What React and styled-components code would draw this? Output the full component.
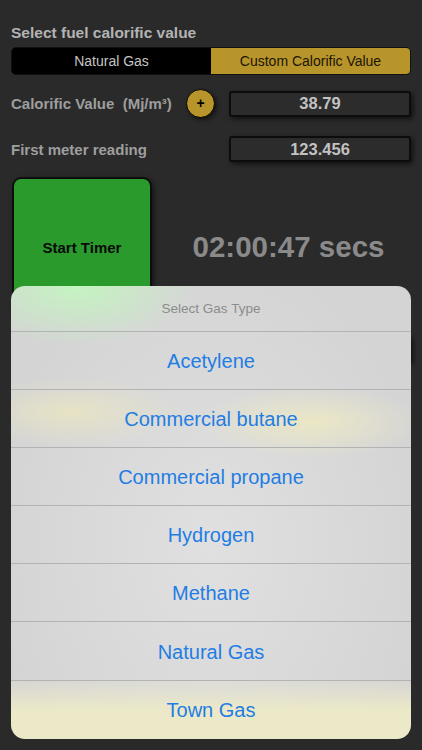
import React, { useState } from 'react'
import styled, { createGlobalStyle } from 'styled-components'

const GlobalStyle = createGlobalStyle`
  html, body {
    margin: 0;
    padding: 0;
    background: #2a2a2a;
  }
  body {
    font-family: "Liberation Sans", Arial, sans-serif;
    overflow: hidden;
  }
`;

const gasTypes = [
  'Acetylene',
  'Commercial butane',
  'Commercial propane',
  'Hydrogen',
  'Methane',
  'Natural Gas',
  'Town Gas',
];

const App = () => {
  const [mode, setMode] = useState('custom');
  const [gas, setGas] = useState('Natural Gas');

  return (
    <Page>
      <GlobalStyle />
      <SectionTitle>Select fuel calorific value</SectionTitle>
      <Segmented>
        <Segment $active={mode === 'natural'} onClick={() => setMode('natural')}>
          Natural Gas
        </Segment>
        <Segment $active={mode === 'custom'} onClick={() => setMode('custom')}>
          Custom Calorific Value
        </Segment>
      </Segmented>

      <FieldRow $top={14}>
        <FieldLabel $width={175}>Calorific Value&nbsp; (Mj/m³)</FieldLabel>
        <PlusButton>+</PlusButton>
        <ValueBox>38.79</ValueBox>
      </FieldRow>

      <FieldRow $top={18}>
        <FieldLabel>First meter reading</FieldLabel>
        <ValueBox>123.456</ValueBox>
      </FieldRow>

      <TimerRow>
        <StartButton>Start Timer</StartButton>
        <TimerText>02:00:47 secs</TimerText>
      </TimerRow>

      <FieldRow $top={19}>
        <FieldLabel>Second meter reading</FieldLabel>
        <ValueBox />
      </FieldRow>

      <Sheet>
        <SheetHeader>Select Gas Type</SheetHeader>
        {gasTypes.map((name) => (
          <SheetOption key={name} onClick={() => setGas(name)}>
            {name}
          </SheetOption>
        ))}
      </Sheet>
    </Page>
  )
}

export default App

const Page = styled.div`
  position: relative;
  height: 750px;
  box-sizing: border-box;
  padding: 24px 11px 0;
`;

const SectionTitle = styled.div`
  font-size: 15.5px;
  font-weight: 700;
  line-height: 18px;
  color: #b3b3b3;
  margin-bottom: 5px;
`;

const Segmented = styled.div`
  display: flex;
  height: 28px;
  border-radius: 5px;
  border: 1px solid #111;
  background: #000;
  overflow: hidden;
  box-sizing: border-box;
`;

const Segment = styled.div`
  flex: 1;
  display: flex;
  align-items: center;
  justify-content: center;
  font-size: 14px;
  color: ${(props) => props.$active ? '#1a1405' : '#c4c4c4'};
  background: ${(props) => props.$active ? '#b8952a' : '#000'};
  cursor: pointer;
`;

const FieldRow = styled.div`
  display: flex;
  align-items: center;
  margin-top: ${(props) => props.$top}px;
`;

const FieldLabel = styled.div`
  width: ${(props) => props.$width ? props.$width + 'px' : 'auto'};
  font-size: 15px;
  font-weight: 700;
  color: #9e9e9e;
  white-space: nowrap;
`;

const PlusButton = styled.button`
  width: 29px;
  height: 29px;
  border-radius: 50%;
  border: 1.5px solid #000;
  background: #b8952a;
  color: #000;
  font-family: "Liberation Sans", Arial, sans-serif;
  font-size: 14px;
  font-weight: 700;
  padding: 0 0 1px;
  box-shadow: 2px 2px 4px rgba(0, 0, 0, 0.55);
`;

const ValueBox = styled.div`
  margin-left: auto;
  width: 182px;
  height: 26px;
  box-sizing: border-box;
  border: 2px solid #0c0c0c;
  border-radius: 3px;
  background: #2c2c2c;
  box-shadow: 2px 2px 5px rgba(0, 0, 0, 0.6);
  display: flex;
  align-items: center;
  justify-content: center;
  font-size: 16.5px;
  font-weight: 700;
  color: #c2c2c2;
`;

const TimerRow = styled.div`
  display: flex;
  align-items: center;
  margin-top: 15px;
  padding-left: 1px;
`;

const StartButton = styled.button`
  width: 140px;
  height: 140px;
  border-radius: 9px;
  border: 2px solid #0d0d0d;
  background: #2a9a2d;
  color: #0a0a0a;
  font-family: "Liberation Sans", Arial, sans-serif;
  font-size: 15px;
  font-weight: 700;
  box-shadow: 2px 2px 5px rgba(0, 0, 0, 0.5);
`;

const TimerText = styled.div`
  flex: 1;
  text-align: center;
  padding-left: 14px;
  font-size: 29.5px;
  font-weight: 700;
  color: #8a8a8a;
  white-space: nowrap;
`;

const Sheet = styled.div`
  position: absolute;
  top: 286px;
  left: 11px;
  width: 400px;
  border-radius: 14px;
  overflow: hidden;
  background:
    radial-gradient(ellipse 120px 60px at 65px 0px, rgba(196, 246, 192, 0.95), rgba(196, 246, 192, 0)),
    radial-gradient(ellipse 110px 36px at 300px 136px, rgba(236, 232, 196, 0.95), rgba(236, 232, 196, 0)),
    radial-gradient(ellipse 110px 34px at 60px 126px, rgba(232, 228, 196, 0.9), rgba(232, 228, 196, 0)),
    linear-gradient(to bottom, rgba(236, 233, 200, 0) 392px, rgba(236, 233, 200, 1) 425px),
    radial-gradient(ellipse 220px 300px at 200px 260px, #e0e0e0, #d4d4d4);
`;

const SheetHeader = styled.div`
  height: 46px;
  display: flex;
  align-items: center;
  justify-content: center;
  font-size: 13.5px;
  color: #8c8c8c;
  border-bottom: 1px solid #b3b3b3;
  box-sizing: border-box;
`;

const SheetOption = styled.div`
  height: 58.1px;
  display: flex;
  align-items: center;
  justify-content: center;
  padding-top: 2px;
  font-size: 20px;
  color: #1f7de4;
  box-sizing: border-box;
  border-bottom: 1px solid #b3b3b3;
  cursor: pointer;
  &:last-child {
    border-bottom: none;
  }
`;
